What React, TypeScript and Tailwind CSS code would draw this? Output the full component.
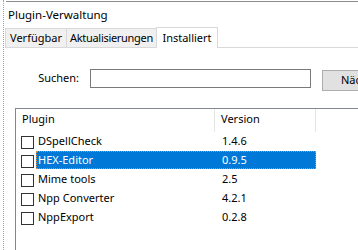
import { useState } from "react";

const plugins = [
  { name: "DSpellCheck", version: "1.4.6" },
  { name: "HEX-Editor", version: "0.9.5" },
  { name: "Mime tools", version: "2.5" },
  { name: "Npp Converter", version: "4.2.1" },
  { name: "NppExport", version: "0.2.8" },
];

export default function App() {
  const [selected] = useState(1);

  return (
    <div className="w-[358px] h-[250px] overflow-hidden bg-white pl-[3px] font-['Noto_Sans',sans-serif] text-[11px] text-black">
      <div className="h-full border-l border-dotted border-[#a0a0a0] flex flex-col">
        {/* window top edge */}
        <div className="mt-px ml-[2px] h-px bg-[#8c8c8c] shrink-0" />

        <div className="pl-[4px] pt-[5px] leading-[16px] h-[25px] shrink-0 text-[11.5px]">Plugin-Verwaltung</div>

        {/* tabs */}
        <div className="flex items-end h-[21px] shrink-0">
          <div className="ml-px w-[61px] h-[20px] shrink-0 flex items-center justify-center border-l border-t border-b border-[#d9d9d9] bg-[#f0f0f0]">
            Verfügbar
          </div>
          <div className="w-[90px] h-[20px] shrink-0 flex items-center justify-center border-l border-t border-b border-[#d9d9d9] bg-[#f0f0f0] tracking-[-0.3px]">
            Aktualisierungen
          </div>
          <div className="w-[62px] h-[21px] shrink-0 flex items-center justify-center border-l border-t border-r border-[#d9d9d9] bg-white">
            Installiert
          </div>
          <div className="flex-1 h-px border-b border-[#d9d9d9]" />
        </div>

        {/* search */}
        <div className="flex items-start mt-[21px] shrink-0">
          <div className="w-[86px] h-[19px] pr-[11px] shrink-0 flex items-center justify-end">Suchen:</div>
          <div className="w-[221px] h-[19px] border border-[#7a7a7a] bg-white shrink-0" />
          <div className="ml-[11px] mt-px w-[80px] h-[21px] shrink-0 border border-[#adadad] bg-[#e1e1e1] flex items-center justify-center">
            Nächste
          </div>
        </div>

        {/* plugin list */}
        <div className="mt-[17px] ml-[11px] flex-1 border-l border-t border-[#828790] bg-white">
          <div className="flex h-[23px]">
            <div className="w-[199px] h-full shrink-0 pl-[6px] pt-[2px] border-r border-[#e5e5e5]">Plugin</div>
            <div className="w-[101px] h-full shrink-0 pl-[6px] pt-[2px] border-r border-[#e5e5e5]">Version</div>
          </div>
          {plugins.map((p, i) => (
            <div key={p.name} className="flex items-start h-[19px]">
              <div className="ml-[5px] mt-[4px] w-[13px] h-[13px] border border-[#333333] bg-white shrink-0" />
              <div
                className={
                  i === selected
                    ? "ml-[2px] w-[280px] h-[18px] shrink-0 flex items-center border border-dotted border-[#f08a28] bg-[#0078d7] text-white"
                    : "ml-[2px] w-[280px] h-[18px] shrink-0 flex items-center border border-transparent"
                }
              >
                <div className="w-[185px] shrink-0 pl-px">{p.name}</div>
                <div>{p.version}</div>
              </div>
            </div>
          ))}
        </div>
      </div>
    </div>
  );
}
